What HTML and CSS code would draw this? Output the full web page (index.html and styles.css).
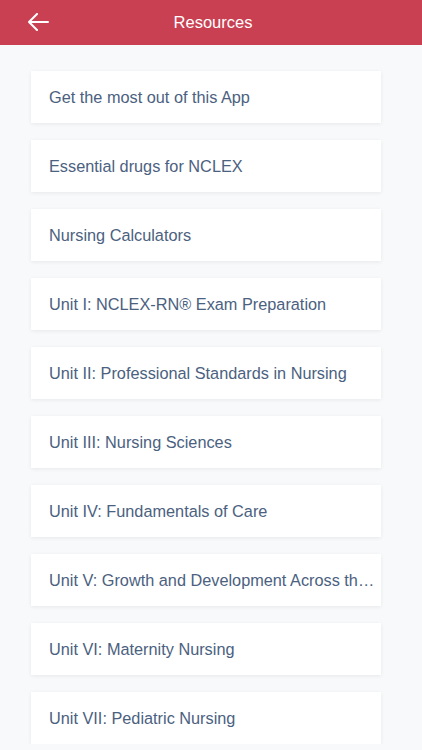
FILE: index.html
```html
<!DOCTYPE html>
<html>
<head>
<meta charset="utf-8">
<link rel="stylesheet" href="styles.css">
</head>
<body>
<header class="bar">
  <svg class="back" width="22" height="18" viewBox="0 0 22 18"><path d="M21 9H2M10 1L2 9l8 8" fill="none" stroke="#fff" stroke-width="2" stroke-linecap="round" stroke-linejoin="round"/></svg>
  <div class="title">Resources</div>
</header>
<main class="list">
  <div class="card"><span>Get the most out of this App</span></div>
  <div class="card"><span>Essential drugs for NCLEX</span></div>
  <div class="card"><span>Nursing Calculators</span></div>
  <div class="card"><span>Unit I: NCLEX-RN® Exam Preparation</span></div>
  <div class="card"><span>Unit II: Professional Standards in Nursing</span></div>
  <div class="card"><span>Unit III: Nursing Sciences</span></div>
  <div class="card"><span>Unit IV: Fundamentals of Care</span></div>
  <div class="card"><span>Unit V: Growth and Development Across the Lifespan</span></div>
  <div class="card"><span>Unit VI: Maternity Nursing</span></div>
  <div class="card"><span>Unit VII: Pediatric Nursing</span></div>
</main>
</body>
</html>
```
FILE: styles.css
```css
html, body {
  margin: 0;
  padding: 0;
  background: #f8f9fb;
  font-family: "Liberation Sans", Arial, sans-serif;
  overflow: hidden;
}
.bar {
  height: 45px;
  background: #c94052;
  display: flex;
  align-items: center;
  justify-content: center;
  position: relative;
}
.back {
  position: absolute;
  left: 27px;
  top: 13px;
}
.title {
  color: #fff;
  font-size: 16.5px;
  margin-left: 4px;
}
.list {
  display: flex;
  flex-direction: column;
  gap: 17px;
  padding: 26px 41px 0 31px;
}
.card {
  height: 52px;
  background: #fff;
  box-shadow: 0 1px 4px rgba(0,0,0,0.07);
  display: flex;
  align-items: center;
  padding: 0 6px 0 18px;
  color: #4b6180;
  font-size: 16.3px;
  white-space: nowrap;
  overflow: hidden;
}
.card span {
  overflow: hidden;
  text-overflow: ellipsis;
}
```
